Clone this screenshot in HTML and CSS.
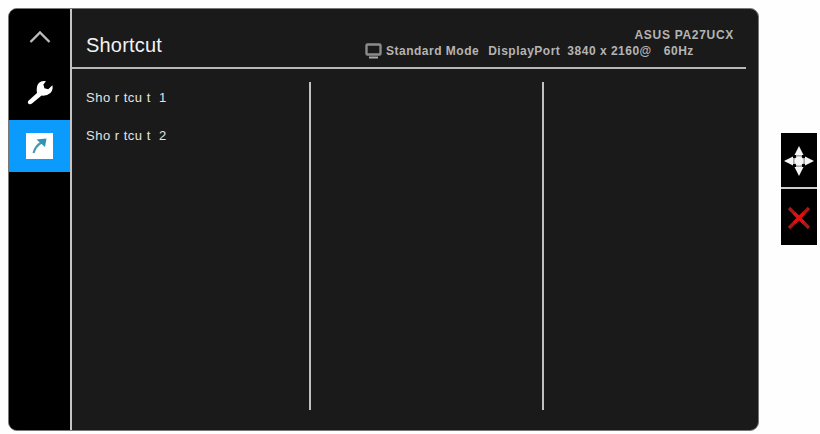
FILE: index.html
```html
<!DOCTYPE html>
<html lang="en">
<head>
    <meta charset="UTF-8">
    <meta name="viewport" content="width=device-width, initial-scale=1.0">
    <title>Shortcut</title>
    <link rel="stylesheet" href="styles.css">
</head>
<body>
    <div class="osd">
        <nav class="sidebar">
            <div class="tab">
                <svg width="24" height="16" viewBox="0 0 24 16">
                    <path d="M2.5 13L12 3.5L21.5 13" fill="none" stroke="#bbb" stroke-width="2.4"/>
                </svg>
            </div>
            <div class="tab wrench">
                <svg width="28" height="28" viewBox="0 0 28 28">
                    <path d="M3.5 25.2Q1 24.6 2.2 22L11 14Q9.8 7.6 12.8 4Q15.6 1.2 20 2.2L17.4 5.6L18.4 9.2L22.2 10.2L26.4 6.2Q27.6 10.6 24.4 14Q20.8 17.2 15.6 16.6L6 24.6Q4.5 25.6 3.5 25.2Z" fill="#fff"/>
                </svg>
            </div>
            <div class="tab active">
                <svg width="27" height="26" viewBox="0 0 27 26">
                    <rect width="27" height="26" fill="#fff"/>
                    <path d="M7.5 20Q9 13.5 16 9" fill="none" stroke="#4a9aae" stroke-width="2.2"/>
                    <path d="M10.5 6.5L20.5 5.5L19 14Z" fill="#3092b4"/>
                </svg>
            </div>
        </nav>
        <main class="content">
            <header class="header">
                <h1>Shortcut</h1>
                <div class="info">
                    <div class="model">ASUS PA27UCX</div>
                    <div class="status">
                        <svg width="17" height="16" viewBox="0 0 17 16">
                            <rect x="1.5" y="1.5" width="14" height="10" rx="1" fill="none" stroke="#8c8c8c" stroke-width="2.4"/>
                            <path d="M4 14.5H13" stroke="#aaa" stroke-width="1.8"/>
                        </svg>
                        <span class="mode">Standard Mode</span>
                        <span class="input">DisplayPort</span>
                        <span class="resolution">3840 x 2160@</span>
                        <span>60Hz</span>
                    </div>
                </div>
            </header>
            <div class="columns">
                <ul class="column">
                    <li>Sho r tcu t  1</li>
                    <li>Sho r tcu t  2</li>
                </ul>
                <div class="column"></div>
                <div class="column"></div>
            </div>
        </main>
    </div>
    <div class="keys">
        <div class="key">
            <svg width="30" height="30" viewBox="0 0 30 30" fill="#f5f5f5">
                <path d="M15 0L19.5 9H10.5Z"/>
                <path d="M15 30L19.5 21H10.5Z"/>
                <path d="M0 15L9 10.5V19.5Z"/>
                <path d="M30 15L21 10.5V19.5Z"/>
                <path d="M9 15H21M15 9V21" stroke="#aaa" stroke-width="6"/>
                <circle cx="15" cy="15" r="4.5"/>
            </svg>
        </div>
        <div class="key">
            <svg width="24" height="24" viewBox="0 0 24 24">
                <path d="M2 2L22 22M22 2L2 22" stroke="#a81814" stroke-width="3.4"/>
                <path d="M7 7L17 17M17 7L7 17" stroke="#e01010" stroke-width="3.4"/>
            </svg>
        </div>
    </div>
</body>
</html>
```
FILE: styles.css
```css
* {
    margin: 0;
    padding: 0;
    box-sizing: border-box;
}

body {
    display: flex;
    align-items: flex-start;
    height: 434px;
    padding: 8px;
    background: #fefefe;
    font-family: "Liberation Sans", Arial, sans-serif;
    overflow: hidden;
}

svg {
    display: block;
    flex-shrink: 0;
}

/* Monitor menu */
.osd {
    display: flex;
    flex-shrink: 0;
    width: 751px;
    height: 423px;
    border: 1px solid #777;
    border-radius: 9px;
    background: #1a1a1a;
    overflow: hidden;
}

.sidebar {
    width: 63px;
    background: #000;
    border-right: 2px solid #c4c4c4;
}

.tab {
    display: flex;
    align-items: center;
    justify-content: center;
    height: 55px;
}

.wrench {
    height: 56px;
    padding-top: 2px;
}

.active {
    height: 52px;
    background: #0a9bfc;
}

.content {
    flex: 1;
}

.header {
    display: flex;
    justify-content: space-between;
    width: 674px;
    height: 60px;
    padding: 0 12px 0 14px;
    border-bottom: 2px solid #b8b8b8;
}

h1 {
    padding-top: 24px;
    font-size: 20px;
    font-weight: normal;
    line-height: 24px;
    letter-spacing: 0.2px;
    color: #f2f2f2;
}

.info {
    padding-top: 19px;
    font-size: 12px;
    font-weight: bold;
    line-height: 15px;
    letter-spacing: 0.5px;
    color: #b4b4b4;
}

.model {
    text-align: right;
    letter-spacing: 0.7px;
}

.status {
    display: flex;
    width: 369px;
    padding-top: 1px;
}

.status svg {
    margin-top: -1px;
}

.mode {
    margin-left: 4px;
}

.input {
    margin-left: 9px;
}

.resolution {
    margin: 0 12px 0 7px;
}

/* Option columns */
.columns {
    display: grid;
    grid-template-columns: 239px 233px 1fr;
    height: 328px;
    margin-top: 13px;
}

.column {
    border-right: 2px solid #c0c0c0;
}

.column:last-child {
    border-right: none;
}

ul {
    padding: 7px 0 0 14px;
    list-style: none;
}

li {
    height: 38px;
    font-size: 13px;
    line-height: 18px;
    letter-spacing: 0.5px;
    color: #e4e4e4;
    white-space: pre;
}

/* Keys beside the monitor */
.keys {
    display: flex;
    flex-direction: column;
    gap: 2px;
    margin: 125px 0 0 22px;
    background: #ccc;
}

.key {
    display: flex;
    align-items: center;
    justify-content: center;
    width: 36px;
    height: 54px;
    padding-top: 2px;
    background: #000;
}

.key + .key {
    height: 56px;
}
```
